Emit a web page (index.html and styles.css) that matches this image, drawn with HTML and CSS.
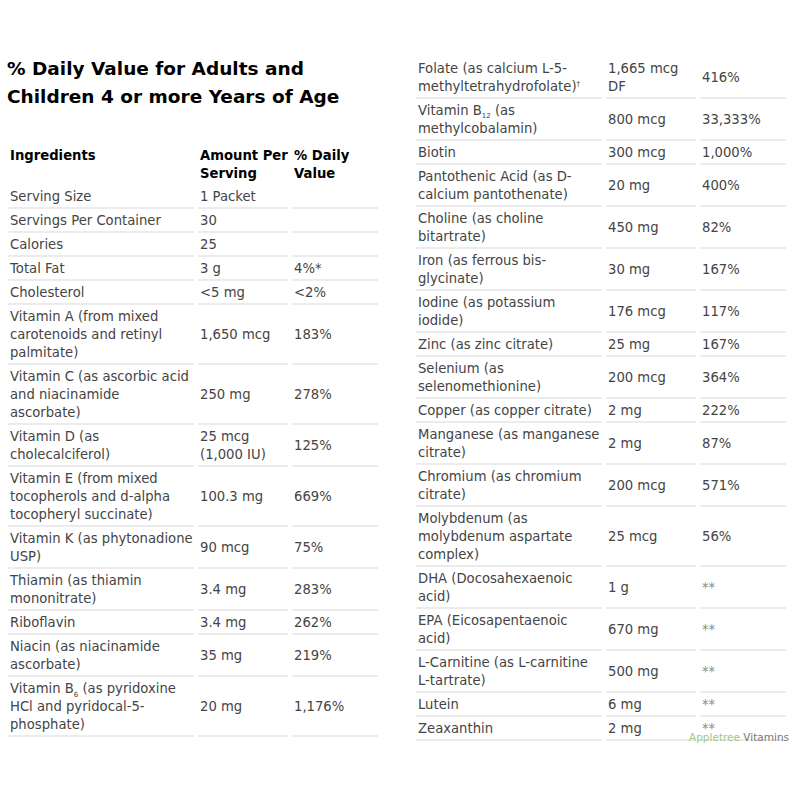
FILE: index.html
```html
<!DOCTYPE html>
<html lang="en">
<head>
    <meta charset="UTF-8">
    <meta name="viewport" content="width=device-width, initial-scale=1.0">
    <title>Supplement Facts</title>
    <link rel="stylesheet" href="styles.css">
</head>
<body>
    <div class="page">
        <div class="col">
            <h2 class="title">% Daily Value for Adults and Children 4 or more Years of Age</h2>
            <table class="facts">
                <colgroup>
                    <col class="c-name">
                    <col class="c-amount">
                    <col class="c-dv">
                </colgroup>
                <thead>
                    <tr>
                        <th>Ingredients</th>
                        <th>Amount Per<br>Serving</th>
                        <th>% Daily<br>Value</th>
                    </tr>
                </thead>
                <tbody>
                    <tr><td>Serving Size</td><td>1 Packet</td><td></td></tr>
                    <tr><td>Servings Per Container</td><td>30</td><td></td></tr>
                    <tr><td>Calories</td><td>25</td><td></td></tr>
                    <tr><td>Total Fat</td><td>3 g</td><td>4%*</td></tr>
                    <tr><td>Cholesterol</td><td>&lt;5 mg</td><td>&lt;2%</td></tr>
                    <tr><td>Vitamin A (from mixed carotenoids and retinyl palmitate)</td><td>1,650 mcg</td><td>183%</td></tr>
                    <tr><td>Vitamin C (as ascorbic acid and niacinamide ascorbate)</td><td>250 mg</td><td>278%</td></tr>
                    <tr><td>Vitamin D (as cholecalciferol)</td><td>25 mcg (1,000 IU)</td><td>125%</td></tr>
                    <tr><td>Vitamin E (from mixed tocopherols and d-alpha tocopheryl succinate)</td><td>100.3 mg</td><td>669%</td></tr>
                    <tr><td>Vitamin K (as phytonadione USP)</td><td>90 mcg</td><td>75%</td></tr>
                    <tr><td>Thiamin (as thiamin mononitrate)</td><td>3.4 mg</td><td>283%</td></tr>
                    <tr><td>Riboflavin</td><td>3.4 mg</td><td>262%</td></tr>
                    <tr><td>Niacin (as niacinamide ascorbate)</td><td>35 mg</td><td>219%</td></tr>
                    <tr><td>Vitamin B<sub>6</sub> (as pyridoxine HCl and pyridocal-5-phosphate)</td><td>20 mg</td><td>1,176%</td></tr>
                </tbody>
            </table>
        </div>

        <div class="col">
            <table class="facts facts-right">
                <colgroup>
                    <col class="c-name">
                    <col class="c-amount">
                    <col class="c-dv">
                </colgroup>
                <tbody>
                    <tr><td>Folate (as calcium L-5-methyltetrahydrofolate)<sup>&dagger;</sup></td><td>1,665 mcg DF</td><td>416%</td></tr>
                    <tr><td>Vitamin B<sub>12</sub> (as methylcobalamin)</td><td>800 mcg</td><td>33,333%</td></tr>
                    <tr><td>Biotin</td><td>300 mcg</td><td>1,000%</td></tr>
                    <tr><td>Pantothenic Acid (as D-calcium pantothenate)</td><td>20 mg</td><td>400%</td></tr>
                    <tr><td>Choline (as choline bitartrate)</td><td>450 mg</td><td>82%</td></tr>
                    <tr><td>Iron (as ferrous bis-glycinate)</td><td>30 mg</td><td>167%</td></tr>
                    <tr><td>Iodine (as potassium iodide)</td><td>176 mcg</td><td>117%</td></tr>
                    <tr><td>Zinc (as zinc citrate)</td><td>25 mg</td><td>167%</td></tr>
                    <tr><td>Selenium (as selenomethionine)</td><td>200 mcg</td><td>364%</td></tr>
                    <tr><td>Copper (as copper citrate)</td><td>2 mg</td><td>222%</td></tr>
                    <tr><td>Manganese (as manganese citrate)</td><td>2 mg</td><td>87%</td></tr>
                    <tr><td>Chromium (as chromium citrate)</td><td>200 mcg</td><td>571%</td></tr>
                    <tr><td>Molybdenum (as molybdenum aspartate complex)</td><td>25 mcg</td><td>56%</td></tr>
                    <tr><td>DHA (Docosahexaenoic acid)</td><td>1 g</td><td class="star">**</td></tr>
                    <tr><td>EPA (Eicosapentaenoic acid)</td><td>670 mg</td><td class="star">**</td></tr>
                    <tr><td>L-Carnitine (as L-carnitine L-tartrate)</td><td>500 mg</td><td class="star">**</td></tr>
                    <tr><td>Lutein</td><td>6 mg</td><td class="star">**</td></tr>
                    <tr><td>Zeaxanthin</td><td>2 mg</td><td class="star">**</td></tr>
                </tbody>
            </table>
        </div>
    </div>

    <div class="watermark"><span class="wm-green">Appletree</span> Vitamins</div>
</body>
</html>
```

FILE: styles.css
```css
body {
    font-family: "DejaVu Sans", Verdana, sans-serif;
    font-size: 13.2px;
    color: #444;
    margin: 0;
    background: #fff;
}
.page {
    display: grid;
    grid-template-columns: 370px 370px;
    column-gap: 38px;
    align-items: start;
    padding: 51px 8px 0 8px;
}
.title {
    font-size: 18.5px;
    line-height: 28px;
    font-weight: bold;
    color: #000;
    margin: 4px 0 34px -1px;
}
.facts {
    border-collapse: separate;
    border-spacing: 4px 0;
    margin: 0 -4px;
    table-layout: fixed;
    width: 378px;
}
.facts-right {
    margin-top: 6px;
}
.c-name {
    width: 186px;
}
.c-amount {
    width: 90px;
}
.c-dv {
    width: 86px;
}
.facts th {
    text-align: left;
    vertical-align: top;
    font-weight: bold;
    color: #000;
    line-height: 18px;
    white-space: nowrap;
    padding: 2px 0 2px 2px;
}
.facts td {
    text-align: left;
    vertical-align: middle;
    line-height: 18px;
    padding: 3px 1px 1px 2px;
    border-bottom: 2px solid #ececec;
}
.facts sub,
.facts sup {
    font-size: 7px;
    line-height: 0;
}
.facts-right sub {
    vertical-align: -3px;
}
.star {
    color: #888;
}
.watermark {
    position: absolute;
    left: 689px;
    top: 729px;
    font-size: 10.5px;
    line-height: 16px;
    color: #777;
}
.wm-green {
    color: #a3c982;
}
```
